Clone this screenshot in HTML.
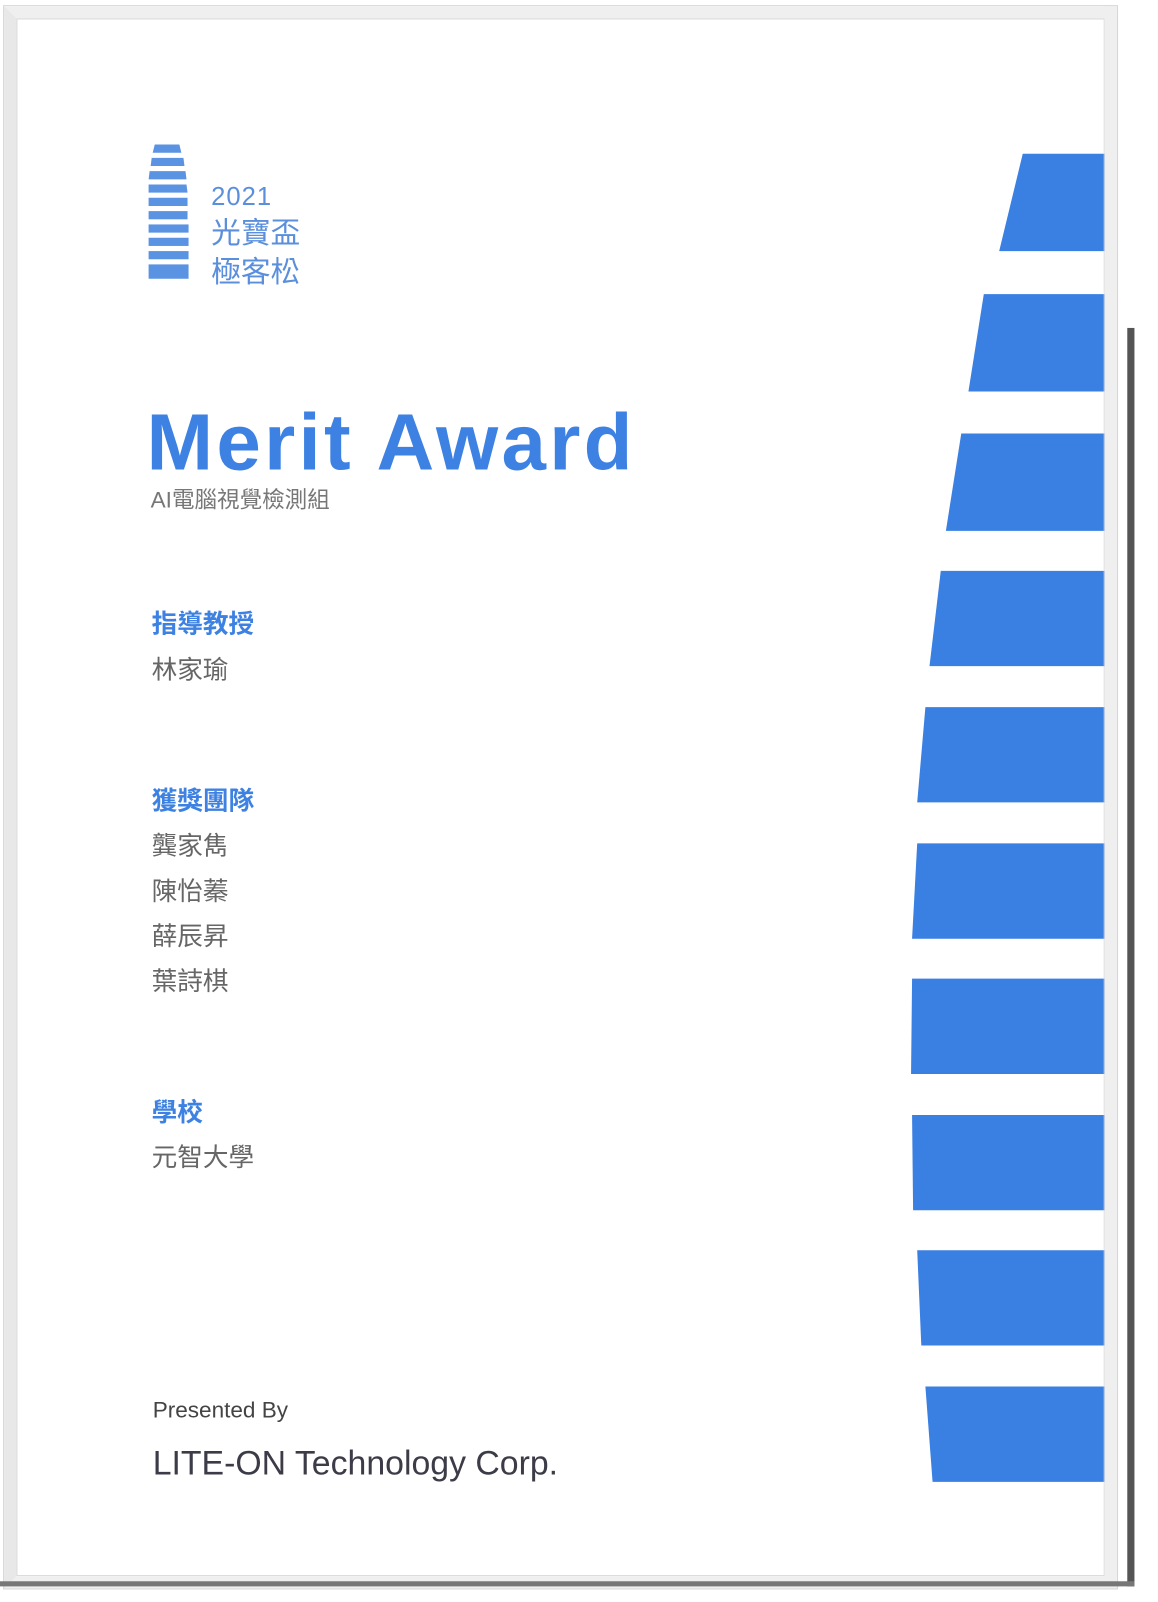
<!DOCTYPE html>
<html><head><meta charset="utf-8"><style>
body{margin:0;width:1158px;height:1602px;background:#fff;position:relative;overflow:hidden;font-family:"Liberation Sans","Noto Sans CJK TC",sans-serif}
#w{position:absolute;left:0;top:0;width:1130px;height:1563px;transform:scale(1.0248);transform-origin:0 0}
.frame{position:absolute;left:4px;top:6px;width:1062px;height:1520px;border:12px solid #efefef;border-left-color:#e8e8e8;box-shadow:inset 0 0 0 1px #d8d8d8, 0 0 0 1px #d6d6d6}
.dark{position:absolute;background:#555}
.t{position:absolute;white-space:nowrap;line-height:1}
.g{color:#666;font-size:25px}
.h{color:#3d82e2;font-size:25px;font-weight:bold}
</style></head><body><div id="w">
<svg style="position:absolute;left:0;top:0" width="1130" height="1563">
<g fill="#3a7fe2">
<polygon points="998,150 1080,150 1080,245 975,245"/>
<polygon points="960,287 1080,287 1080,382 945,382"/>
<polygon points="938,423 1080,423 1080,518 923,518"/>
<polygon points="918,557 1080,557 1080,650 907,650"/>
<polygon points="903,690 1080,690 1080,783 895,783"/>
<polygon points="895,823 1080,823 1080,916 890,916"/>
<polygon points="890,955 1080,955 1080,1048 889,1048"/>
<polygon points="890,1088 1080,1088 1080,1181 891,1181"/>
<polygon points="895,1220 1080,1220 1080,1313 899,1313"/>
<polygon points="903,1353 1080,1353 1080,1446 910,1446"/>
</g>
<g fill="#5b93e3">
<polygon points="151,141 175,141 177,149 149,149"/>
<polygon points="148,154 179,154 180,162 147,162"/>
<polygon points="146,167 181,167 182,175 145,175"/>
<polygon points="145,180 182,180 183,188 145,188"/>
<polygon points="145,193 183,193 183,201 145,201"/>
<rect x="145" y="206" width="38" height="8"/>
<rect x="145" y="219" width="39" height="8"/>
<rect x="145" y="232" width="39" height="8"/>
<rect x="145" y="245" width="39" height="8"/>
<rect x="145" y="258" width="39" height="14"/>
</g>
</svg>
<div class="frame"></div>
<div class="dark" style="left:1100px;top:320px;width:7px;height:1228px"></div>
<div class="dark" style="left:0;top:1543px;width:1107px;height:5px;background:#777"></div>
<div class="t" style="left:206px;top:180px;font-size:25px;color:#5b8fdc;letter-spacing:1px">2021</div>
<div class="t" style="left:206px;top:209px;font-size:29px;color:#5b8fdc;line-height:38px">光寶盃<br>極客松</div>
<div class="t" style="left:143px;top:392px;font-size:78px;font-weight:bold;letter-spacing:3.2px;color:#3d82e2">Merit Award</div>
<div class="t" style="left:147px;top:477px;font-size:22px;color:#777">AI電腦視覺檢測組</div>
<div class="t h" style="left:148px;top:597px">指導教授</div>
<div class="t g" style="left:148px;top:642px">林家瑜</div>
<div class="t h" style="left:148px;top:770px">獲獎團隊</div>
<div class="t g" style="left:148px;top:804px;line-height:44px">龔家雋<br>陳怡蓁<br>薛辰昇<br>葉詩棋</div>
<div class="t h" style="left:148px;top:1074px">學校</div>
<div class="t g" style="left:148px;top:1118px">元智大學</div>
<div class="t" style="left:149px;top:1365px;font-size:22px;color:#444">Presented By</div>
<div class="t" style="left:149px;top:1411px;font-size:33px;color:#3c3c48">LITE-ON Technology Corp.</div>
</div></body></html>
